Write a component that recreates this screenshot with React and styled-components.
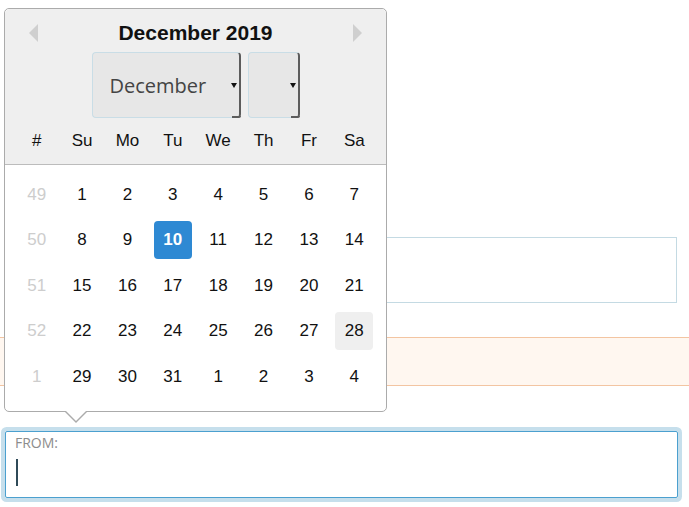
import React from "react"
import styled, { createGlobalStyle } from "styled-components"

const GlobalStyle = createGlobalStyle`
  html, body {
    margin: 0;
    padding: 0;
    background: #fff;
    font-family: "Liberation Sans", Arial, sans-serif;
  }
`

// *** page underneath the popup ***
const Page = styled.div`
  position: relative;
  width: 689px;
  height: 507px;
  overflow: hidden;
  padding-top: 237px;
  box-sizing: border-box;
`

const InfoBox = styled.div`
  margin: 0 12px 0 5px;
  height: 66px;
  box-sizing: border-box;
  border: 1px solid #c4dae3;
`

const NoticeBand = styled.div`
  margin-top: 34px;
  height: 49px;
  box-sizing: border-box;
  background: #fff7f0;
  border-top: 1px solid #f3c5a2;
  border-bottom: 1px solid #f3c5a2;
`

const Field = styled.div`
  margin: 45px 0 0 5px;
  width: 673px;
  height: 67px;
  box-sizing: border-box;
  border: 1px solid #4ba0cf;
  box-shadow: 0 0 0 4px #c6dfec;
  border-radius: 2px;
  padding: 1px 10px;
  font-family: "Open Sans", "Noto Sans", sans-serif;
`

const FieldLabel = styled.div`
  font-size: 14px;
  color: #8c8c8c;
  line-height: 20px;
  margin-left: -1px;
`

const Caret = styled.div`
  margin-top: 6px;
  width: 2px;
  height: 27px;
  background: #2f4a58;
`

// *** date picker popup ***
const Popup = styled.div`
  position: absolute;
  top: 8px;
  left: 4px;
  width: 383px;
  box-sizing: border-box;
  border: 1px solid #ababab;
  border-radius: 5px;
  background: #fff;
  z-index: 10;

  &::before, &::after {
    content: "";
    position: absolute;
    left: 59px;
    border-style: solid;
    border-color: transparent;
  }
  &::before {
    bottom: -12px;
    border-width: 12px 12px 0 12px;
    border-top-color: #ababab;
  }
  &::after {
    bottom: -10px;
    left: 60px;
    border-width: 11px 11px 0 11px;
    border-top-color: #fff;
  }
`

const Head = styled.div`
  background: #efefef;
  border-radius: 5px 5px 0 0;
  border-bottom: 1px solid #bcbcbc;
  padding: 12px 9px 0 9px;
`

const TitleRow = styled.div`
  display: flex;
  align-items: center;
  justify-content: space-between;
  height: 24px;
  padding: 0 15px;
`

const Title = styled.div`
  font-weight: bold;
  font-size: 21px;
  color: #111;
`

const NavArrow = styled.div`
  width: 0;
  height: 0;
  border-top: 9px solid transparent;
  border-bottom: 9px solid transparent;
  ${p => p.$dir === "left"
    ? "border-right: 9px solid #cfcfcf;"
    : "border-left: 9px solid #cfcfcf;"}
`

const SelectRow = styled.div`
  display: flex;
  justify-content: center;
  gap: 7px;
  margin-top: 7px;
`

const Select = styled.div`
  position: relative;
  width: ${p => p.$w}px;
  height: 66px;
  box-sizing: border-box;
  border: 1px solid #c9dde6;
  border-right: 2px solid #5c5c5c;
  border-radius: 4px;
  background: #e7e7e7;
  display: flex;
  align-items: center;
  padding-left: 17px;
  font-family: "Open Sans", "Noto Sans", sans-serif;
  font-size: 20px;
  color: #444;

  &::before {
    content: "";
    position: absolute;
    right: 2px;
    top: 30px;
    border-left: 3.5px solid transparent;
    border-right: 3.5px solid transparent;
    border-top: 5px solid #111;
  }
  &::after {
    content: "";
    position: absolute;
    right: -2px;
    bottom: -1px;
    width: 9px;
    height: 2px;
    background: #5c5c5c;
    border-radius: 0 0 3px 0;
  }
`

const Grid = styled.div`
  display: grid;
  grid-template-columns: repeat(8, 1fr);
`

const HeadCell = styled.div`
  height: 46px;
  display: flex;
  align-items: center;
  justify-content: center;
  font-size: 17px;
  color: #111;
`

const Body = styled.div`
  padding: 7px 9px 11px 9px;
`

const DayCell = styled.div`
  height: 45.5px;
  display: flex;
  align-items: center;
  justify-content: center;
`

const Day = styled.div`
  width: 38px;
  height: 38px;
  border-radius: 4px;
  display: flex;
  align-items: center;
  justify-content: center;
  font-size: 17px;
  color: ${p => p.$week ? "#cdcdcd" : p.$selected ? "#fff" : "#111"};
  font-weight: ${p => p.$selected ? "bold" : "normal"};
  background: ${p => p.$selected ? "#2e89d3" : p.$today ? "#efefef" : "transparent"};
`

const weekdays = ["#", "Su", "Mo", "Tu", "We", "Th", "Fr", "Sa"]

const weeks = [
  [49, 1, 2, 3, 4, 5, 6, 7],
  [50, 8, 9, 10, 11, 12, 13, 14],
  [51, 15, 16, 17, 18, 19, 20, 21],
  [52, 22, 23, 24, 25, 26, 27, 28],
  [1, 29, 30, 31, 1, 2, 3, 4],
]

export default function App() {
  return (
    <Page>
      <GlobalStyle />
      <InfoBox />
      <NoticeBand />
      <Field>
        <FieldLabel>FROM:</FieldLabel>
        <Caret />
      </Field>

      <Popup>
        <Head>
          <TitleRow>
            <NavArrow $dir="left" />
            <Title>December 2019</Title>
            <NavArrow $dir="right" />
          </TitleRow>
          <SelectRow>
            <Select $w={149}>December</Select>
            <Select $w={52} />
          </SelectRow>
          <Grid>
            {weekdays.map(d => <HeadCell key={d}>{d}</HeadCell>)}
          </Grid>
        </Head>
        <Body>
          <Grid>
            {weeks.map((week, wi) =>
              week.map((n, i) => (
                <DayCell key={wi + "-" + i}>
                  <Day
                    $week={i === 0}
                    $selected={wi === 1 && n === 10}
                    $today={wi === 3 && n === 28}
                  >
                    {n}
                  </Day>
                </DayCell>
              ))
            )}
          </Grid>
        </Body>
      </Popup>
    </Page>
  )
}
